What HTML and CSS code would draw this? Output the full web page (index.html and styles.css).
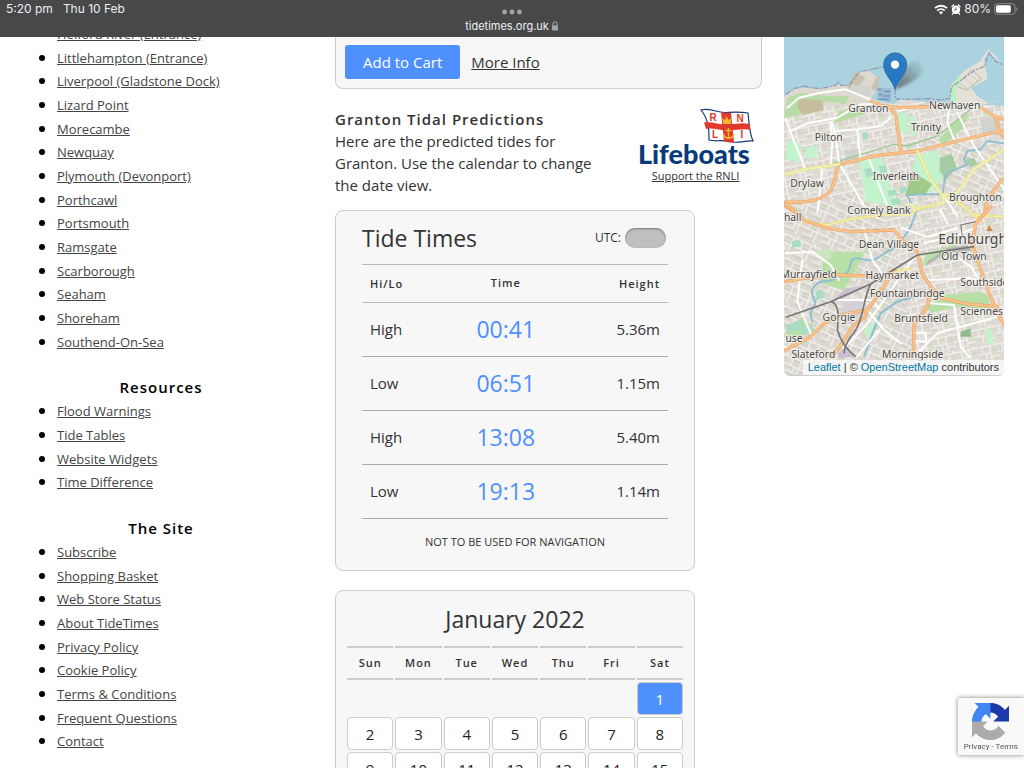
FILE: index.html
```html
<!DOCTYPE html>
<html lang="en">
<head>
<meta charset="utf-8">
<meta name="viewport" content="width=device-width, initial-scale=1">
<title>Granton Tide Times</title>
<link rel="stylesheet" href="styles.css">
</head>
<body>
<header class="status-bar">
  <div class="status-left"><span>5:20 pm</span><span>Thu 10 Feb</span></div>
  <div class="status-centre">
    <svg class="dots" viewBox="0 0 20 6" aria-hidden="true"><circle cx="2.5" cy="3" r="2.4"/><circle cx="10" cy="3" r="2.4"/><circle cx="17.5" cy="3" r="2.4"/></svg>
    <div class="address">tidetimes.org.uk
      <svg class="lock" viewBox="0 0 8 10" aria-hidden="true"><path d="M2 5V3a2 2 0 0 1 4 0v2" fill="none" stroke="#a5a5a8" stroke-width="1.1"/><rect x="1" y="4.4" width="6" height="5" rx=".8" fill="#a5a5a8"/></svg>
    </div>
  </div>
  <div class="status-right">
    <svg class="wifi" viewBox="0 0 14 11" aria-hidden="true"><g fill="none" stroke="#fff" stroke-width="1.8"><path d="M1 4.2a8.6 8.6 0 0 1 12 0"/><path d="M3.3 6.6a5.3 5.3 0 0 1 7.4 0"/></g><path d="M7 10.6 4.9 8.4a3 3 0 0 1 4.2 0z" fill="#fff"/></svg>
    <svg class="alarm" viewBox="0 0 10 11" aria-hidden="true"><circle cx="5" cy="5.7" r="4.2" fill="#fff"/><path d="M.9 2.6 2.6 1M9.100 2.600 7.400 1M2.300 9 1.500 10.200M7.700 9l.8 1.200" stroke="#fff" stroke-width="1.300" stroke-linecap="round"/><path d="M5 3.400v2.500H3.200" fill="none" stroke="#47484a" stroke-width=".9"/></svg>
    <span>80%</span>
    <svg class="battery" viewBox="0 0 25 12" aria-hidden="true"><rect x=".5" y=".5" width="21.5" height="11" rx="3.2" fill="none" stroke="#8e8e91"/><rect x="2" y="2" width="15.5" height="8" rx="1.8" fill="#fff"/><path d="M23.3 4v4c1.6-.6 1.6-3.4 0-4z" fill="#8e8e91"/></svg>
  </div>
</header>

<div class="viewport">
  <div class="page">
    <nav class="sidebar">
      <ul>
        <li><a href="#">Helford River (Entrance)</a></li>
        <li><a href="#">Littlehampton (Entrance)</a></li>
        <li><a href="#">Liverpool (Gladstone Dock)</a></li>
        <li><a href="#">Lizard Point</a></li>
        <li><a href="#">Morecambe</a></li>
        <li><a href="#">Newquay</a></li>
        <li><a href="#">Plymouth (Devonport)</a></li>
        <li><a href="#">Porthcawl</a></li>
        <li><a href="#">Portsmouth</a></li>
        <li><a href="#">Ramsgate</a></li>
        <li><a href="#">Scarborough</a></li>
        <li><a href="#">Seaham</a></li>
        <li><a href="#">Shoreham</a></li>
        <li><a href="#">Southend-On-Sea</a></li>
      </ul>
      <h3>Resources</h3>
      <ul>
        <li><a href="#">Flood Warnings</a></li>
        <li><a href="#">Tide Tables</a></li>
        <li><a href="#">Website Widgets</a></li>
        <li><a href="#">Time Difference</a></li>
      </ul>
      <h3>The Site</h3>
      <ul>
        <li><a href="#">Subscribe</a></li>
        <li><a href="#">Shopping Basket</a></li>
        <li><a href="#">Web Store Status</a></li>
        <li><a href="#">About TideTimes</a></li>
        <li><a href="#">Privacy Policy</a></li>
        <li><a href="#">Cookie Policy</a></li>
        <li><a href="#">Terms &amp; Conditions</a></li>
        <li><a href="#">Frequent Questions</a></li>
        <li><a href="#">Contact</a></li>
      </ul>
    </nav>

    <main class="content">
      <section class="product">
        <button class="cart" type="button">Add to Cart</button>
        <a href="#">More Info</a>
      </section>

      <section class="intro">
        <div class="intro-text">
          <h2>Granton Tidal Predictions</h2>
          <p>Here are the predicted tides for Granton. Use the calendar to change the date view.</p>
        </div>
        <div class="charity">
          <svg class="rnli" viewBox="0 0 116 60" role="img" aria-label="RNLI Lifeboats">
            <path d="M63 2c9-3 15 3 25 2.500 9-.5 13-1 22 .5 1 9 1 19 5 28-8-1-14 3-24 .5-9-2-13 .5-20-1.500 0-10 0-20-8-30z" fill="#fff" stroke="#16397b" stroke-width="1.200"/>
            <path d="M66 14.500c8-1.500 15 2.500 24 2 9-.5 13-2 21.500-.5l1 6c-7-1.500-13 0-21 .5-9 .5-16-3-23.500-1.500z" fill="#e03a2c"/>
            <path d="M83 4.200c3 .6 6 .6 10 .3l3 30c-3 .2-7-.6-10-1.300z" fill="#e03a2c"/>
            <g fill="none" stroke="#f2b632" stroke-width="1.500"><path d="M90.500 20v10M87.500 22.500h6M85.500 26c1 5.500 9 5.500 10.500 0"/></g>
            <path d="m84 10 3 2 1.500-4 2 4 3-2-.5 6h-7.500z" fill="#f2b632"/>
            <g class="flag-letters"><text x="75" y="13">R</text><text x="102" y="14">N</text><text x="77" y="30">L</text><text x="104" y="30">I</text></g>
            <text class="wordmark" x="0" y="56">Lifeboats</text>
          </svg>
          <a href="#">Support the RNLI</a>
        </div>
      </section>

      <section class="card tides">
        <div class="tides-head">
          <h2>Tide Times</h2>
          <label class="utc">UTC: <input type="checkbox" class="switch"></label>
        </div>
        <table class="tide-table">
          <thead><tr><th>Hi/Lo</th><th>Time</th><th>Height</th></tr></thead>
          <tbody>
            <tr><td>High</td><td>00:41</td><td>5.36m</td></tr>
            <tr><td>Low</td><td>06:51</td><td>1.15m</td></tr>
            <tr><td>High</td><td>13:08</td><td>5.40m</td></tr>
            <tr><td>Low</td><td>19:13</td><td>1.14m</td></tr>
          </tbody>
        </table>
        <p class="warning">NOT TO BE USED FOR NAVIGATION</p>
      </section>

      <section class="card calendar">
        <h2>January 2022</h2>
        <table>
          <thead><tr><th>Sun</th><th>Mon</th><th>Tue</th><th>Wed</th><th>Thu</th><th>Fri</th><th>Sat</th></tr></thead>
          <tbody>
            <tr><td></td><td></td><td></td><td></td><td></td><td></td><td><button type="button" class="selected">1</button></td></tr>
            <tr><td><button type="button">2</button></td><td><button type="button">3</button></td><td><button type="button">4</button></td><td><button type="button">5</button></td><td><button type="button">6</button></td><td><button type="button">7</button></td><td><button type="button">8</button></td></tr>
            <tr><td><button type="button">9</button></td><td><button type="button">10</button></td><td><button type="button">11</button></td><td><button type="button">12</button></td><td><button type="button">13</button></td><td><button type="button">14</button></td><td><button type="button">15</button></td></tr>
          </tbody>
        </table>
      </section>
    </main>

    <aside class="map">
      <svg class="map-tiles" viewBox="0 0 660 1014" preserveAspectRatio="xMidYMin slice" role="img" aria-label="Map of Granton and Edinburgh">
        <defs>
          <pattern id="streetsA" width="62" height="54" patternUnits="userSpaceOnUse" patternTransform="rotate(-12)">
            <rect width="62" height="54" fill="#dfdbd4"/><path d="M0 8h62M0 30h38M38 42h24M14 8v22M38 8v46M52 0v8M24 30v24" stroke="#f8f7f5" stroke-width="3" fill="none"/><path d="M3 14h8M20 14h14M42 14h16M42 22h15M4 24h7M4 36h15M28 37h6M42 48h15" stroke="#cdc6bd" stroke-width="2.500"/><path d="M44 26h12v8h-12z" fill="#cfe8c0"/>
          </pattern>
          <pattern id="streetsB" width="58" height="66" patternUnits="userSpaceOnUse" patternTransform="rotate(24)">
            <rect width="58" height="66" fill="#ddd9d2"/><path d="M0 10h58M0 34h58M0 52h30M12 10v24M40 10v56M26 34v18M50 0v10" stroke="#f8f7f5" stroke-width="3" fill="none"/><path d="M16 16h20M16 28h20M44 18h10M3 40h18M44 42h10M4 60h25" stroke="#cac3ba" stroke-width="2.500"/><path d="M17 20h14v5h-14zM4 54h18v4h-18z" fill="#cde6be"/>
          </pattern>
          <linearGradient id="pin" x1="0" y1="0" x2="0" y2="1"><stop offset="0" stop-color="#2e7fc0"/><stop offset="1" stop-color="#2372c4"/></linearGradient>
          <linearGradient id="pinShade" x1="0" y1="1" x2="1" y2="0"><stop offset="0" stop-color="#333" stop-opacity=".65"/><stop offset="1" stop-color="#333" stop-opacity="0"/></linearGradient>
          <filter id="soft" x="-30%" y="-30%" width="160%" height="160%"><feGaussianBlur stdDeviation="5"/></filter>
        </defs>
        <rect width="660" height="1014" fill="url(#streetsA)"/>
        <path d="M0 500 240 470 330 600 400 1014H0z" fill="url(#streetsB)"/>
        <path d="M400 300 660 330V480L480 520z" fill="url(#streetsB)"/>

        <g transform="translate(0 -3)">
          <path d="M0 0H660V210L570 205 435 200 350 190 330 205 265 190 180 160 120 155 60 165 0 205z" fill="#aad3df"/>
          <path d="M0 180 30 158 75 155 115 160 160 145 195 150 225 110 250 100 282 125 275 165 262 185 270 210H60L0 250z" fill="#ddd9ce"/>
          <path d="M500 200 500 150 540 105 590 75 612 40 640 65 660 100V190L600 205z" fill="#e6e1d6"/>
          <path d="M560 155 610 130 600 70 615 50 660 90V190L610 200 580 180z" fill="#aad3df"/>
          <path d="m515 150 48-48 30 25-45 35z" fill="none" stroke="#bbb7b2" stroke-width="3"/><path d="m525 140 30 25m-14-40 30 25m-16-37 30 25" stroke="#c4c0b8" stroke-width="2"/>
          <g fill="#b8dca6"><path d="M10 185 50 170 130 180 195 180 185 205 130 195 60 230 30 240 0 245z"/><path d="m465 310 60-65 30-10-20 45-60 50z"/><path d="m165 225 70-10 10 20-90 25-15 20z"/></g>
          <path d="m45 190 70 2 3 30-60 15-18-25z" fill="#c5bd9c"/>
          <path d="m210 105 35 20-20 25-35 8zM275 125l12-3-8 45-18-8z" fill="#c9c2b0"/>
          <path d="m282 155 42 2-4 42-40-8z" fill="#a6b9cc"/><path d="M280 160h12M300 166h18M284 176h10M298 180h20M284 190h30" stroke="#3b94d8" stroke-width="3"/>
          <path d="M500 165 525 120l8 10-20 40 8 25-21 5z" fill="#b9f2c2"/>
          <g fill="#c3f3cd"><path d="M340 230h30l3 60h-25zM375 240h20l-2 60h-13z"/><path d="m65 335 35-5-2 35h-35z"/><path d="m395 358 70-15 10 85-30 40-75 10z"/><path d="m225 375 70-10 40 150-90-20z"/><path d="m10 310 40 15v55l-45-10z"/></g>
          <path d="m384 405 60 40-20 30-60 5z" fill="#9fca8a"/><path d="m468 365 35-12 15 40-32 40-20-30z" fill="#a5cca0"/><path d="m545 370 25-5 10 20-20 10z" fill="#a5cca0"/>
          <path d="m185 345 42-8 5 30-50 10zM590 245l55-5 10 60-60-5zM205 145l50 5 5 35-70-15z" fill="#d2d2cf"/>
          <g fill="#a8ddc2"><path d="m240 400 28-6 7 22-28 8zM285 390l20-4 5 22-20 5zM310 465l25-5 5 15-25 8zM345 455l20-4 4 16-20 6zM320 490l26-4 5 16-26 6zM235 290l15-3 3 20-15 4z"/></g>
          <path d="M5 175 30 158 60 150 80 155 110 158 155 148 163 138 170 148 195 148 225 108 300 92M333 160v28l30 2 70-2 30 4 35-4 4-35 70-50 30-12 12-42 22 28 22 10" fill="none" stroke="#8885aa" stroke-width="4" stroke-dasharray="16 4 6 4" opacity=".75"/>
          <path d="M660 322 610 315 590 340 550 345 540 370 550 385 515 400 485 415 475 475 420 475 370 478 385 510" fill="none" stroke="#91bfd0" stroke-width="6"/>
          <path d="M150 380 330 325 370 330 460 300 560 220" fill="none" stroke="#9cc891" stroke-width="4"/>
        </g>

        <g transform="translate(0 489)">
          <g fill="#b8dfa5"><path d="M120 155 240 155 230 185 180 270 110 250z"/><path d="m425 160 95-28-30 32-75 35z"/><path d="m480 285 110-10 25 15v35l-125-5z"/><path d="m415 320 60-25 30 30-60 12z"/><path d="m5 390 50-40 40 40-80 30z"/><path d="m530 395 30-10v25h-30z" fill="#92ba91"/></g>
          <g fill="#a8ddc2"><path d="m22 125 25-5 5 18-28 5zM95 275l20-8 5 25-25 10zM5 375l50-15 5 25-50 15zM50 385l35-8 5 18-38 10zM205 170l15 5-4 15-15-5z"/></g>
          <path d="m430 185 60-40 60-10 15 18-80 5-60 40z" fill="#b5b5b5"/>
          <path d="m150 300 35-35 65-8-70 38zM160 460l30-20 25 30-50 5z" fill="#cdbfd2"/>
          <path d="M175 305h60v45h-60z" fill="#d5d0d6"/>
          <path d="m240 390 40-35 5 15-35 50zM605 385l20 5 5 50-20-10z" fill="#c3f3cd"/>
          <path d="m95 155 40-10 10 25-30 20z" fill="#c9e6bc"/>
          <path d="M400 20C390 60 375 95 360 110S340 145 320 150 290 175 265 180 205 160 200 190 185 225 150 238 110 235 90 260 105 300 90 320 80 345 85 365" fill="none" stroke="#91bfd0" stroke-width="6"/>
          <path d="M390 290 340 305 290 340 265 400 240 470" fill="none" stroke="#91bfd0" stroke-width="7"/>
        </g>

        <g fill="none" stroke-linejoin="round" stroke-linecap="round">
          <g transform="translate(0 -3)">
            <g stroke="#fff" stroke-width="6"><path d="M5 248 20 290 65 400M10 215 45 185 110 170 185 160 270 195M20 285 70 262 160 245 230 205 270 205M140 260 145 320 140 385M145 260 155 300 165 380 200 440 240 510M155 285 220 280 290 270 320 245M220 285 230 370M255 370 310 510M495 215 490 260 510 310M520 230 570 330 660 460M570 210 640 240M400 210 345 225M115 400 100 530M470 470 500 510 520 540"/></g>
            <g stroke="#e9a567" stroke-width="10"><path d="M262 195 290 208 340 215 435 212M315 215 335 235 350 345M165 385 280 358 400 345 520 315 660 282M165 385C152 410 155 450 135 470S80 502 5 498M5 510 50 540M590 215 635 242 660 250M635 242 645 285 660 305M655 430 610 490 600 540"/></g>
            <g stroke="#fbc48d" stroke-width="6"><path d="M262 195 290 208 340 215 435 212M315 215 335 235 350 345M165 385 280 358 400 345 520 315 660 282M165 385C152 410 155 450 135 470S80 502 5 498M5 510 50 540M590 215 635 242 660 250M635 242 645 285 660 305M655 430 610 490 600 540"/></g>
            <g stroke="#d9d98c" stroke-width="9"><path d="M5 415 70 398 165 385M400 345 440 430 475 478 520 470 570 400 660 340M475 478 480 500 400 520 380 505M490 485 540 510 570 540"/></g>
            <g stroke="#f5f3ac" stroke-width="6"><path d="M5 415 70 398 165 385M400 345 440 430 475 478 520 470 570 400 660 340M475 478 480 500 400 520 380 505M490 485 540 510 570 540"/></g>
          </g>
          <g transform="translate(0 489)">
            <g stroke="#fff" stroke-width="6"><path d="M5 160 85 155 140 195 165 240M55 180 40 305 80 400M240 85 265 180 300 230M355 85 430 110 520 85M420 130 520 105 570 85M470 30 490 70M400 160 370 200 300 300 250 370 180 445M160 300 265 300 285 325M430 240 560 235 640 260M440 310 510 315 530 440 555 470M390 400 425 398 427 425 390 422M390 470 460 400 640 350M250 330 300 390 350 430M285 390 220 470M520 170 560 200 600 260M0 440 55 455 85 480"/></g>
            <g stroke="#e4d784" stroke-width="8"><path d="M60 65 130 75 210 55 300 45 380 45M160 225 245 228M380 45 400 25 450 15M520 5 570 45 590 65M565 45 660 50M380 205 300 225"/></g>
            <g stroke="#f5ef9f" stroke-width="5"><path d="M60 65 130 75 210 55 300 45 380 45M160 225 245 228M380 45 400 25 450 15M520 5 570 45 590 65M565 45 660 50M380 205 300 225"/></g>
            <g stroke="#e9a567" stroke-width="10"><path d="M5 10 60 60 130 85 200 95 330 90 355 120 400 155 415 220 440 260 475 295 550 312 640 320M440 270 430 320 390 375 388 465M330 210 300 260 250 330 245 350 210 375 160 450 140 470M5 450 80 410 120 370 170 345 250 330M5 245 60 235 150 230M620 20 575 70 565 130 600 240 640 340 660 375M160 225 330 230"/></g>
            <g stroke="#fbc48d" stroke-width="6"><path d="M5 10 60 60 130 85 200 95 330 90 355 120 400 155 415 220 440 260 475 295 550 312 640 320M440 270 430 320 390 375 388 465M330 210 300 260 250 330 245 350 210 375 160 450 140 470M5 450 80 410 120 370 170 345 250 330M5 245 60 235 150 230M620 20 575 70 565 130 600 240 640 340 660 375M160 225 330 230"/></g>
            <g stroke="#777" stroke-width="5" stroke-linecap="butt"><path d="M5 352 140 305 260 252 400 165 570 140M140 305Q170 310 160 390 175 440 215 470M260 252C235 300 240 370 200 410Q180 440 180 460" /><path d="M530 75 575 65M530 75 535 110" stroke-width="3"/></g>
            <path d="m616 75 10 18h-20z" fill="#d08a4a"/>
          </g>
        </g>

        <g class="map-labels">
          <text x="253" y="224">Granton</text><text x="512" y="215">Newhaven</text><text x="426" y="283">Trinity</text><text x="134" y="312">Pilton</text><text x="336" y="430">Inverleith</text><text x="69" y="451">Drylaw</text><text x="574" y="491">Broughton</text><text x="285" y="530">Comely Bank</text><text x="26" y="551">hall</text><text x="315" y="632">Dean Village</text><text class="city" x="566" y="620">Edinburgh</text><text x="540" y="670">Old Town</text><text x="74" y="723">Murrayfield</text><text x="325" y="727">Haymarket</text><text x="601" y="747">Southside</text><text x="370" y="780">Fountainbridge</text><text x="593" y="834">Sciennes</text><text x="165" y="852">Gorgie</text><text x="411" y="855">Bruntsfield</text><text x="30" y="914">use</text><text x="88" y="962">Slateford</text><text x="386" y="964">Morningside</text>
        </g>
        <path d="M334 157 360 95Q405 50 415 87T334 157z" fill="url(#pinShade)" filter="url(#soft)"/>
        <path d="M333 157C325 128 299 114 299 82a34 34 0 0 1 69 0c0 32-27 46-35 75z" fill="url(#pin)" stroke="#2468a5" stroke-width="2.500"/><circle cx="333" cy="83" r="12.500" fill="#fff"/>
      </svg>
      <p class="attribution"><a href="#">Leaflet</a> | © <a href="#">OpenStreetMap</a> contributors</p>
    </aside>
  </div>
</div>

<div class="captcha">
  <svg viewBox="0 0 64 64" aria-hidden="true">
    <path d="M64 32V4.700l-7.200 7.200C51 4.700 42 .1 32 .1 21.600.1 12.400 5 6.500 12.700l11.800 11.900a15.500 15.500 0 0 1 4.700-5.300c2.100-1.600 5-2.900 9-2.900 5.500 0 10.500 3 13.100 7.300L36.800 32z" fill="#1c3aa9"/>
    <path d="M31.900.1H4.600l7.200 7.200C4.600 13.100 0 22.100 0 32.100c0 10.400 5 19.600 12.600 25.500l11.900-11.800a15.500 15.500 0 0 1-5.300-4.700c-1.600-2.100-2.900-5-2.900-9 0-5.500 3-10.500 7.300-13.100l8.300 8.300z" fill="#4285f4"/>
    <path d="M0 32.100v27.200l7.200-7.100C13 59.300 22 63.900 32 63.900c10.400 0 19.600-5 25.500-12.600L45.700 39.400a15.500 15.500 0 0 1-4.700 5.300c-2.100 1.600-5 2.900-9 2.900-5.500 0-10.500-3-13.100-7.300l8.300-8.200z" fill="#ababab"/>
  </svg>
  <p><a href="#">Privacy</a> - <a href="#">Terms</a></p>
</div>
</body>
</html>
```
FILE: styles.css
```css
* { box-sizing: border-box; }

body {
  margin: 0;
  height: 100vh;
  overflow: hidden;
  display: flex;
  flex-direction: column;
  background: #fff;
  color: #333;
  font-family: "Open Sans", "Noto Sans", sans-serif;
  font-size: 15px;
  line-height: 22px;
}

h2, h3, p, ul { margin: 0; }
a { color: inherit; }
button { font-family: inherit; cursor: pointer; }

/* Status bar */
.status-bar {
  flex: none;
  display: grid;
  grid-template-columns: 1fr auto 1fr;
  height: 37px;
  padding: 1px 6px 0;
  background: #47484a;
  color: #eee;
  font-family: Inter, "Liberation Sans", sans-serif;
  font-size: 12px;
  line-height: 16px;
}
.status-left { display: flex; gap: 10px; }
.status-centre { display: flex; flex-direction: column; align-items: center; padding-top: 8px; font-size: 11px; }
.dots { width: 20px; height: 6px; fill: #a5a5a8; }
.address { display: flex; align-items: center; gap: 2px; margin-top: 3px; }
.lock { width: 8px; height: 10px; }
.status-right { display: flex; justify-content: flex-end; align-items: center; align-self: start; gap: 3px; }
.wifi { width: 14px; height: 11px; }
.alarm { width: 10px; height: 11px; }
.battery { width: 24px; height: 12px; }

/* Page columns */
.viewport { flex: 1; min-height: 0; overflow: hidden; }
.page {
  display: grid;
  grid-template-columns: 296fr 427fr 220fr;
  gap: 22px;
  align-items: start;
  padding: 0 20px 0 17px;
}

/* Sidebar, scrolled part-way down its list */
.sidebar { margin-top: -15px; padding-right: 8px; }
.sidebar ul { padding-left: 40px; color: #000; font-size: 16px; line-height: 1.48; }
.sidebar a { color: #444; font-size: 13px; }
.sidebar h3 {
  margin-top: 22px;
  color: #000;
  font-size: 15px;
  font-weight: 600;
  line-height: 24px;
  letter-spacing: 1px;
  text-align: center;
}

/* Product */
.product {
  display: flex;
  align-items: center;
  gap: 11px;
  padding: 8px 9px 9px;
  background: #f7f7f7;
  border: 1px solid #ccc;
  border-top: 0;
  border-radius: 0 0 8px 8px;
}
.cart {
  height: 34px;
  padding: 0 18px;
  border: 0;
  border-radius: 3px;
  background: #4d90fe;
  color: #fff;
  font-size: 15px;
}

/* Introduction */
.intro { display: flex; gap: 20px; margin: 19px 0 14px; }
.intro-text { flex: 1; }
.intro h2 { font-size: 15px; font-weight: 600; line-height: 22px; letter-spacing: 1px; }
.charity { flex: none; width: 133px; text-align: center; font-size: 11px; line-height: 16px; }
.charity a { display: block; }
.rnli { display: block; width: 116px; height: 60px; margin: 0 auto; overflow: visible; }
.wordmark { fill: #083a7a; font: 900 27px Lato, "Open Sans", sans-serif; }
.flag-letters { fill: #e03a2c; font: 700 10px "Liberation Sans", sans-serif; text-anchor: middle; }

/* Cards */
.card {
  width: 360px;
  max-width: 100%;
  margin-bottom: 19px;
  background: #f7f7f7;
  border: 1px solid #ccc;
  border-radius: 8px;
}
.card h2 { font-size: 23px; font-weight: 400; line-height: 32px; }

.tides { padding: 11px 26px 17px; }
.tides-head { display: flex; align-items: center; justify-content: space-between; padding-bottom: 10px; }
.utc { display: flex; align-items: center; gap: 4px; padding-right: 2px; font-size: 12px; }
.switch {
  appearance: none;
  width: 41px;
  height: 20px;
  margin: 0;
  border-radius: 10px;
  background: #bfbfbf;
  box-shadow: inset 0 1px 2px #777;
}
.tide-table { width: 100%; border-collapse: collapse; table-layout: fixed; }
.tide-table th {
  height: 38px;
  padding: 0 8px;
  border-top: 1px solid #bbb;
  border-bottom: 1px solid #bbb;
  font-weight: 600;
  letter-spacing: 1px;
}
.tide-table td { height: 54px; padding: 0 8px 2px; border-bottom: 1px solid #aaa; }
.tide-table th, .tide-table td { text-align: left; }
.tide-table th:first-child { width: 28%; }
.tide-table th:nth-child(2), .tide-table td:nth-child(2) { width: 38%; padding: 0 0 2px; text-align: center; }
.tide-table td:nth-child(2) { color: #4d90fe; font-size: 23px; }
.tide-table th:last-child, .tide-table td:last-child { text-align: right; }
.warning { margin-top: 12px; font-size: 11px; text-align: center; }
.tide-table th, .calendar th { font-size: 11px; }

.calendar { padding: 12px 9px 10px; }
.calendar h2 { text-align: center; }
.calendar table { width: 100%; margin-top: 9px; border-spacing: 2px; table-layout: fixed; }
.calendar th {
  height: 34px;
  padding: 0;
  border-top: 2px solid #ccc;
  border-bottom: 2px solid #ccc;
  font-weight: 600;
  letter-spacing: 1px;
}
.calendar td { height: 33px; padding: 0; }
.calendar td button {
  display: block;
  width: 100%;
  height: 33px;
  padding: 0;
  border: 1px solid #ccc;
  border-radius: 4px;
  background: #fff;
  color: #222;
  font-size: 15px;
  font-weight: 500;
}
.calendar td .selected { background: #4d90fe; color: #fff; }

/* Map */
.map { position: relative; overflow: hidden; border-bottom: 1px solid #ccc; border-radius: 0 0 6px 6px; }
.map-tiles { display: block; width: 100%; }
.map-labels { fill: #474747; stroke: #f4f1ec; stroke-width: 5px; stroke-linejoin: round; paint-order: stroke; font: 31px "Noto Sans", sans-serif; text-anchor: middle; }
.city { font-size: 42px; }
.attribution {
  position: absolute;
  right: 0;
  bottom: 0;
  padding: 0 5px;
  background: rgba(255, 255, 255, .7);
  font: 11px/15px "Liberation Sans", sans-serif;
  white-space: nowrap;
}
.attribution a { color: #0078a8; text-decoration: none; }

/* Captcha badge */
.captcha {
  position: fixed;
  right: 0;
  bottom: 13px;
  padding: 5px 6px 3px;
  background: #f9f9f9;
  border-radius: 2px 0 0 2px;
  box-shadow: 0 0 5px #808080;
  color: #555;
  font: 8px/10px Roboto, sans-serif;
  text-align: center;
}
.captcha svg { display: block; width: 37px; height: 37px; margin: 0 auto 2px; }
.captcha a { text-decoration: none; }
```
